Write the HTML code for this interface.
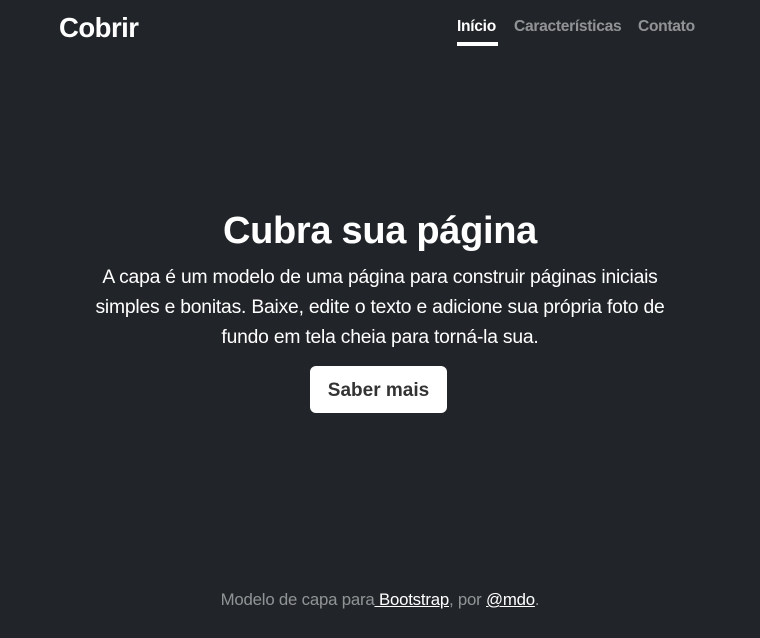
<!DOCTYPE html>
<html><head><meta charset="utf-8"><style>
html,body{margin:0;padding:0}
body{width:760px;height:638px;background:#212529;color:#fff;font-family:"Liberation Sans",sans-serif;position:relative;overflow:hidden}
.brand{position:absolute;left:59px;top:12px;font-size:27.5px;font-weight:bold;letter-spacing:-0.5px}
.nav a{position:absolute;top:18px;font-size:15.6px;font-weight:bold;color:rgba(255,255,255,.5);text-decoration:none;letter-spacing:-0.3px;white-space:nowrap}
.nav a.act{color:#fff}
.ul{position:absolute;left:457px;top:42px;width:41px;height:4px;background:#fff}
h1{position:absolute;left:0;width:760px;top:210px;margin:0;text-align:center;font-size:38px;font-weight:bold;letter-spacing:-0.3px}
p.lead{position:absolute;left:0;width:760px;top:263px;margin:0;text-align:center;font-size:19.3px;line-height:30px;white-space:nowrap;letter-spacing:-0.2px}
.btn{position:absolute;left:310px;top:366px;width:137px;height:47px;background:#fff;border-radius:6px;color:#333;font-weight:bold;font-size:19px;text-align:center;line-height:49px}
.foot{position:absolute;left:0;width:760px;top:590px;text-align:center;font-size:16.8px;color:rgba(255,255,255,.5);letter-spacing:-0.2px}
.foot a{color:#fff;text-decoration:underline}
</style></head><body>
<div class="brand">Cobrir</div>
<div class="nav">
<a class="act" style="left:457px">Início</a>
<a style="left:514px">Características</a>
<a style="left:638px">Contato</a>
</div>
<div class="ul"></div>
<h1>Cubra sua página</h1>
<p class="lead">A capa é um modelo de uma página para construir páginas iniciais<br>simples e bonitas. Baixe, edite o texto e adicione sua própria foto de<br>fundo em tela cheia para torná-la sua.</p>
<div class="btn">Saber mais</div>
<div class="foot">Modelo de capa para<a> Bootstrap</a>, por <a>@mdo</a>.</div>
</body></html>
